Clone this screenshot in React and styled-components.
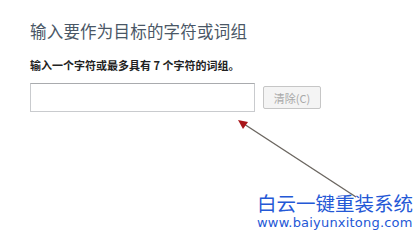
import React from "react";
import styled, { createGlobalStyle } from "styled-components";

const Global = createGlobalStyle`
  html, body { margin: 0; padding: 0; background: #fff; }
  body { width: 419px; height: 247px; overflow: hidden; position: relative;
    font-family: "Microsoft YaHei", "Noto Sans CJK SC", "Noto Sans", sans-serif; }
`;

const Page = styled.div`
  position: relative;
  width: 419px;
  height: 247px;
  box-sizing: border-box;
  padding: 20px 0 0 30px;
`;

const Title = styled.div`
  font-size: 16.5px;
  line-height: 22px;
  color: #4a5766;
  letter-spacing: 0.2px;
`;

const Hint = styled.div`
  margin-top: 16px;
  font-size: 11px;
  line-height: 14px;
  color: #222;
  font-weight: 700;
`;

const Row = styled.div`
  margin-top: 11px;
  display: flex;
  align-items: center;
  gap: 8px;
`;

const Field = styled.div`
  width: 225px;
  height: 29px;
  box-sizing: border-box;
  border: 1px solid #c9cbce;
  border-top-color: #a9abae;
  background: #fff;
`;

const ClearButton = styled.div`
  width: 58px;
  height: 23px;
  box-sizing: border-box;
  border: 1px solid #c6c6c6;
  border-radius: 2px;
  background: #f4f4f4;
  color: #a8a8a8;
  font-size: 11px;
  display: flex;
  align-items: center;
  justify-content: center;
`;

const Arrow = styled.svg`
  position: absolute;
  left: 0;
  top: 0;
  pointer-events: none;
`;

const Watermark = styled.div`
  position: absolute;
  left: 257px;
  top: 192px;
  color: #2458d6;
  display: flex;
  flex-direction: column;
`;

const WmTitle = styled.div`
  font-size: 19.5px;
  line-height: 22px;
  font-family: "Noto Sans CJK SC", sans-serif;
`;

const WmUrl = styled.div`
  font-size: 13px;
  line-height: 14px;
  margin-top: 2px;
  font-family: "DejaVu Sans", sans-serif;
  letter-spacing: 0.2px;
`;

export default function App() {
  return (
    <>
      <Global />
      <Page>
        <Title>输入要作为目标的字符或词组</Title>
        <Hint>输入一个字符或最多具有 7 个字符的词组。</Hint>
        <Row>
          <Field />
          <ClearButton>清除(C)</ClearButton>
        </Row>
        <Arrow width="419" height="247" viewBox="0 0 419 247">
          <line x1="244" y1="124" x2="356" y2="197" stroke="#6b6660" strokeWidth="1.4" />
          <polygon points="238,120 248,122 243,129" fill="#a8161a" />
        </Arrow>
        <Watermark>
          <WmTitle>白云一键重装系统</WmTitle>
          <WmUrl>www.baiyunxitong.com</WmUrl>
        </Watermark>
      </Page>
    </>
  );
}
